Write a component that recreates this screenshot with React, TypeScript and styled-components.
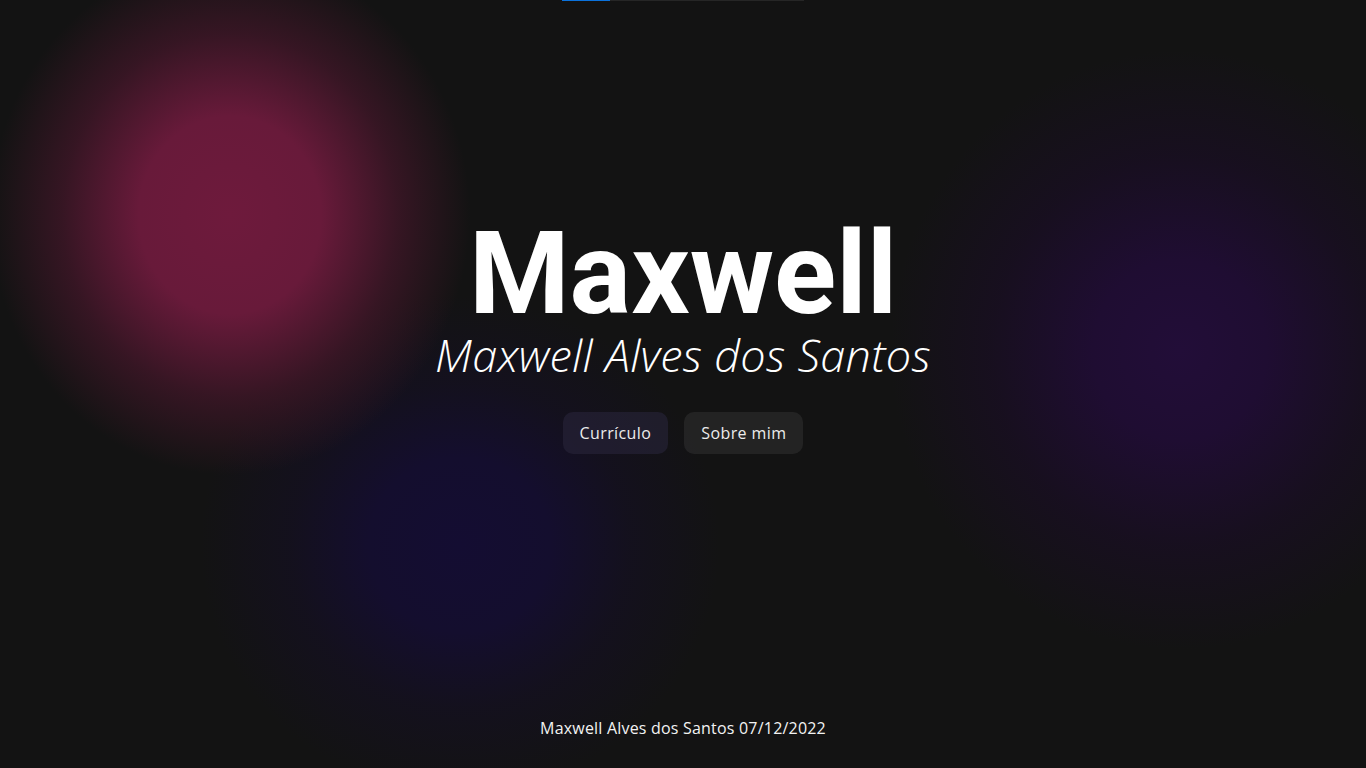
import styled, { createGlobalStyle } from "styled-components";

const GlobalStyle = createGlobalStyle`
	* {
		box-sizing: border-box;
	}
	html,
	body {
		margin: 0;
		padding: 0;
		background: #131313;
	}
`;

const Page = styled.div`
	min-height: 100vh;
	display: flex;
	flex-direction: column;
	align-items: center;
	color: #ffffff;
	font-family: "Open Sans", "Noto Sans", sans-serif;
	background-color: #131313;
	background-image: radial-gradient(
			ellipse 240px 260px at 230px 215px,
			rgba(110, 26, 60, 1) 0%,
			rgba(104, 26, 58, 1) 38%,
			rgba(60, 22, 38, 0.85) 70%,
			rgba(19, 19, 19, 0) 100%
		),
		radial-gradient(
			ellipse 290px 300px at 1180px 350px,
			rgba(34, 13, 56, 1) 0%,
			rgba(31, 13, 50, 1) 30%,
			rgba(25, 14, 35, 0.75) 65%,
			rgba(19, 19, 19, 0) 100%
		),
		radial-gradient(
			ellipse 260px 250px at 460px 545px,
			rgba(20, 13, 50, 1) 0%,
			rgba(20, 14, 46, 1) 35%,
			rgba(20, 16, 32, 0.8) 65%,
			rgba(19, 19, 19, 0) 100%
		);
`;

const ProgressTrack = styled.div`
	width: 242px;
	height: 1px;
	background: #262626;
	display: flex;
`;

const ProgressFill = styled.div`
	height: 100%;
	background: #0b72dc;
`;

const Hero = styled.main`
	flex: 1;
	display: flex;
	flex-direction: column;
	align-items: center;
	padding-top: 227px;
`;

const Title = styled.h1`
	margin: 0;
	font-family: Roboto, "Liberation Sans", sans-serif;
	font-weight: 700;
	font-size: 115px;
	line-height: 92px;
`;

const Subtitle = styled.h2`
	margin: 8px 0 0;
	font-family: "Open Sans", "Noto Sans", sans-serif;
	font-weight: 300;
	font-style: italic;
	font-size: 45px;
	line-height: 54px;
	letter-spacing: 0.3px;
`;

const Actions = styled.div`
	display: flex;
	gap: 16px;
	margin-top: 30px;
`;

const Button = styled.button<{ $tint?: boolean }>`
	height: 42px;
	padding: 0 17px;
	border: none;
	border-radius: 10px;
	background: ${(p) => (p.$tint ? "rgba(40, 36, 58, 0.6)" : "rgba(255, 255, 255, 0.07)")};
	color: #ececec;
	font-family: "Open Sans", "Noto Sans", sans-serif;
	font-size: 16px;
	font-weight: 500;
	letter-spacing: 0.4px;
	cursor: pointer;
`;

const Footer = styled.footer`
	padding-bottom: 28px;
	font-size: 16px;
	line-height: 24px;
	color: #f2f2f2;
	letter-spacing: 0.2px;
`;

export default function App() {
	const progress = 20;
	return (
		<>
			<GlobalStyle />
			<Page>
				<ProgressTrack>
					<ProgressFill style={{ width: `${progress}%` }} />
				</ProgressTrack>
				<Hero>
					<Title>Maxwell</Title>
					<Subtitle>Maxwell Alves dos Santos</Subtitle>
					<Actions>
						<Button $tint>Currículo</Button>
						<Button>Sobre mim</Button>
					</Actions>
				</Hero>
				<Footer>Maxwell Alves dos Santos 07/12/2022</Footer>
			</Page>
		</>
	);
}
